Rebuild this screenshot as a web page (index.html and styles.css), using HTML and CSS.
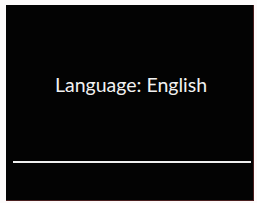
FILE: index.html
```html
<!DOCTYPE html>
<html>
<head>
<meta charset="utf-8">
<link rel="stylesheet" href="styles.css">
</head>
<body>
<div class="screen">
  <div class="label">Language: English</div>
  <div class="rule"></div>
</div>
</body>
</html>
```
FILE: styles.css
```css
html, body {
  margin: 0;
  padding: 0;
  background: #fdfbfb;
}
body {
  padding: 5px 3px 2px 6px;
  width: 257px;
  height: 203px;
  box-sizing: border-box;
}
.screen {
  box-sizing: border-box;
  width: 248px;
  height: 196px;
  background: #030303;
  border-right: 1px solid #4a2020;
  border-bottom: 1px solid #4a2020;
  display: flex;
  flex-direction: column;
}
.label {
  margin-top: 68px;
  text-align: center;
  color: #f2f2f2;
  font-family: Lato, "Liberation Sans", sans-serif;
  font-size: 19.5px;
  line-height: 24px;
  padding-left: 3px;
}
.rule {
  margin: 64px 2px 0 7px;
  height: 2px;
  background: #f0f0f0;
}
```
